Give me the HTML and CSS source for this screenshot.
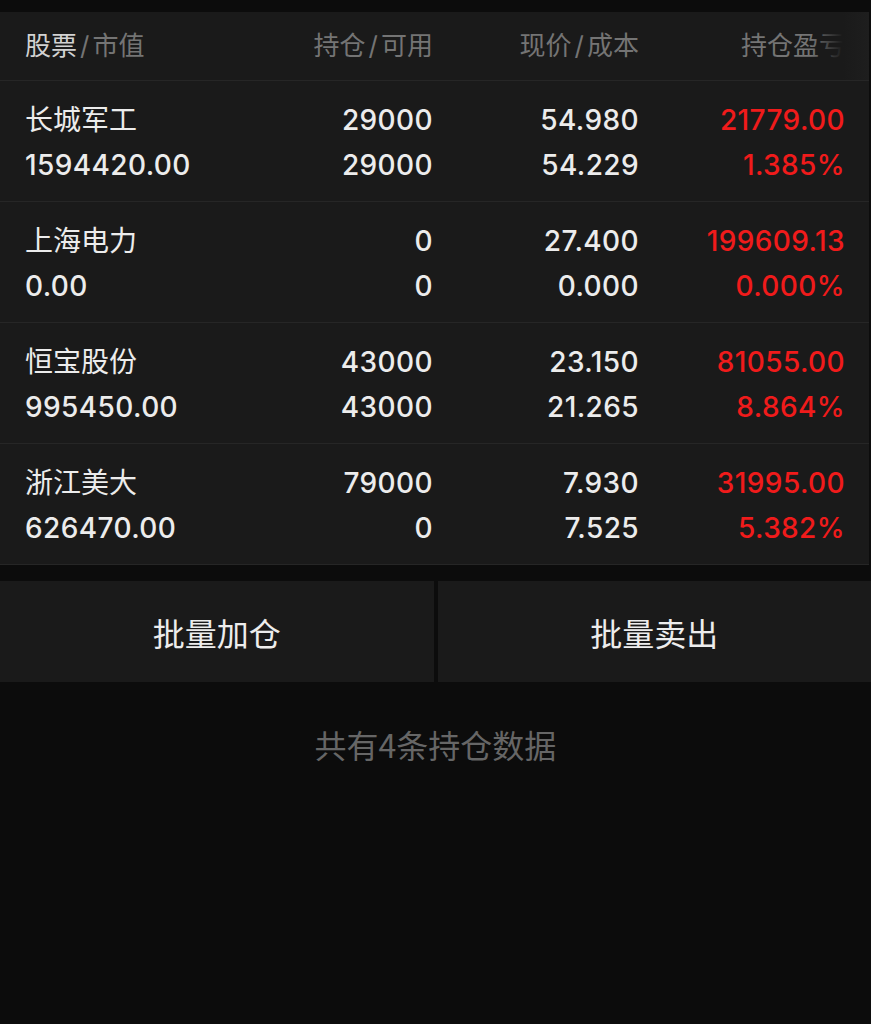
FILE: index.html
```html
<!DOCTYPE html>
<html lang="zh-CN">
<head>
    <meta charset="UTF-8">
    <meta name="viewport" content="width=device-width, initial-scale=1.0">
    <title>持仓</title>
    <link rel="stylesheet" href="styles.css">
</head>
<body>

    <div class="holdings">
        <div class="holdings-head">
            <div class="col col-name"><span class="head-main">股票</span><span class="sep">/</span>市值</div>
            <div class="col">持仓<span class="sep">/</span>可用</div>
            <div class="col">现价<span class="sep">/</span>成本</div>
            <div class="col">持仓盈亏</div>
            <div class="head-fade"></div>
        </div>

        <div class="holding-row">
            <div class="col col-name">
                <span class="name">长城军工</span>
                <span>1594420.00</span>
            </div>
            <div class="col">
                <span>29000</span>
                <span>29000</span>
            </div>
            <div class="col">
                <span>54.980</span>
                <span>54.229</span>
            </div>
            <div class="col profit">
                <span>21779.00</span>
                <span>1.385%</span>
            </div>
        </div>

        <div class="holding-row">
            <div class="col col-name">
                <span class="name">上海电力</span>
                <span>0.00</span>
            </div>
            <div class="col">
                <span>0</span>
                <span>0</span>
            </div>
            <div class="col">
                <span>27.400</span>
                <span>0.000</span>
            </div>
            <div class="col profit">
                <span>199609.13</span>
                <span>0.000%</span>
            </div>
        </div>

        <div class="holding-row">
            <div class="col col-name">
                <span class="name">恒宝股份</span>
                <span>995450.00</span>
            </div>
            <div class="col">
                <span>43000</span>
                <span>43000</span>
            </div>
            <div class="col">
                <span>23.150</span>
                <span>21.265</span>
            </div>
            <div class="col profit">
                <span>81055.00</span>
                <span>8.864%</span>
            </div>
        </div>

        <div class="holding-row">
            <div class="col col-name">
                <span class="name">浙江美大</span>
                <span>626470.00</span>
            </div>
            <div class="col">
                <span>79000</span>
                <span>0</span>
            </div>
            <div class="col">
                <span>7.930</span>
                <span>7.525</span>
            </div>
            <div class="col profit">
                <span>31995.00</span>
                <span>5.382%</span>
            </div>
        </div>
    </div>

    <div class="batch-actions">
        <button class="batch-btn" type="button">批量加仓</button>
        <button class="batch-btn" type="button">批量卖出</button>
    </div>

    <p class="summary">共有4条持仓数据</p>

</body>
</html>
```

FILE: styles.css
```css
/* General Styles */
body {
    margin: 0;
    padding: 12px 0 0;
    background-color: #0c0c0c;
    color: #ececec;
    font-family: Inter, "Noto Sans CJK SC", sans-serif;
}

/* Holdings table */
.holdings {
    background-color: #1a1a1a;
    margin-right: 2px;
    border-bottom: 1px solid #262626;
}

.holdings-head,
.holding-row {
    display: grid;
    grid-template-columns: 200px 208px 206px 206px;
    padding: 0 24px 0 25px;
}

.holdings-head {
    position: relative;
    height: 68px;
    line-height: 68px;
    font-size: 26px;
    color: #747474;
}

.head-main {
    color: #d2d2d2;
}

.sep {
    padding: 0 3px;
}

.head-fade {
    position: absolute;
    top: 0;
    right: 0;
    width: 58px;
    height: 100%;
    background: linear-gradient(to right, rgba(26, 26, 26, 0), #1a1a1a 55%, #1e1e1e);
}

.holding-row {
    border-top: 1px solid #262626;
    padding-top: 17px;
    padding-bottom: 13px;
    font-size: 28px;
    font-weight: 500;
    letter-spacing: 0.4px;
    line-height: 45px;
}

.name {
    font-weight: 400;
    letter-spacing: 0;
}

.col {
    display: flex;
    flex-direction: column;
    align-items: flex-end;
    white-space: nowrap;
}

.holdings-head .col {
    display: block;
    text-align: right;
}

.holdings-head .col-name {
    text-align: left;
}

.col-name {
    align-items: flex-start;
}

.profit {
    color: #f01b1b;
}

/* Batch buttons */
.batch-actions {
    display: flex;
    gap: 4px;
    margin-top: 16px;
}

.batch-btn {
    flex: 1;
    height: 101px;
    border: none;
    padding: 0;
    background-color: #1a1a1a;
    color: #ededed;
    font-family: "Noto Sans CJK SC", sans-serif;
    font-size: 32px;
    cursor: pointer;
}

.summary {
    margin: 0;
    padding-top: 41px;
    text-align: center;
    color: #666;
    font-size: 32px;
    line-height: 42px;
    font-family: "Noto Sans CJK SC", sans-serif;
}
```
